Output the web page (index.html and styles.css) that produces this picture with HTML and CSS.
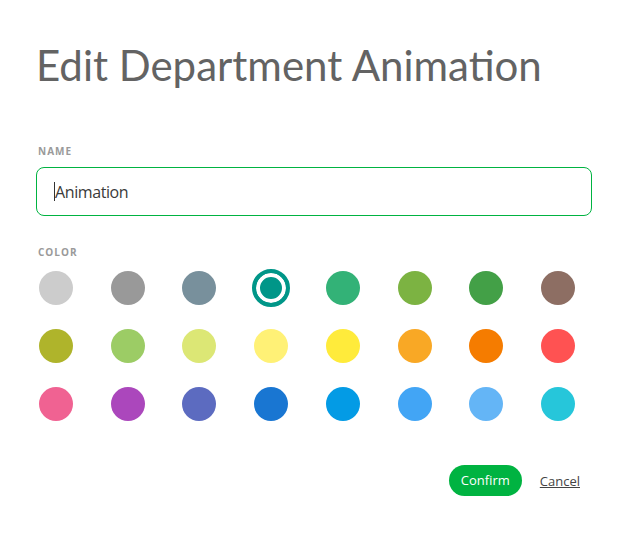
FILE: index.html
```html
<!DOCTYPE html>
<html>
<head>
<meta charset="utf-8">
<link rel="stylesheet" href="styles.css">
</head>
<body>
<div class="dialog">
  <h1 class="title">Edit Department Animation</h1>
  <label class="label label-name" for="name">NAME</label>
  <div class="field-wrap">
    <input id="name" class="field" type="text" value="Animation">
    <span class="caret"></span>
  </div>
  <div class="label label-color">COLOR</div>
  <div class="swatches">
    <div class="row">
      <span class="cell"><span class="dot" style="background:#cccccc"></span></span>
      <span class="cell"><span class="dot" style="background:#999999"></span></span>
      <span class="cell"><span class="dot" style="background:#78909c"></span></span>
      <span class="cell"><span class="dot selected" style="background:#009688"></span></span>
      <span class="cell"><span class="dot" style="background:#33b277"></span></span>
      <span class="cell"><span class="dot" style="background:#7cb342"></span></span>
      <span class="cell"><span class="dot" style="background:#43a047"></span></span>
      <span class="cell"><span class="dot" style="background:#8d6e63"></span></span>
    </div>
    <div class="row">
      <span class="cell"><span class="dot" style="background:#afb42b"></span></span>
      <span class="cell"><span class="dot" style="background:#9ccc65"></span></span>
      <span class="cell"><span class="dot" style="background:#dce775"></span></span>
      <span class="cell"><span class="dot" style="background:#fff176"></span></span>
      <span class="cell"><span class="dot" style="background:#ffeb3b"></span></span>
      <span class="cell"><span class="dot" style="background:#f9a825"></span></span>
      <span class="cell"><span class="dot" style="background:#f57c00"></span></span>
      <span class="cell"><span class="dot" style="background:#ff5252"></span></span>
    </div>
    <div class="row">
      <span class="cell"><span class="dot" style="background:#f06292"></span></span>
      <span class="cell"><span class="dot" style="background:#ab47bc"></span></span>
      <span class="cell"><span class="dot" style="background:#5c6bc0"></span></span>
      <span class="cell"><span class="dot" style="background:#1976d2"></span></span>
      <span class="cell"><span class="dot" style="background:#039be5"></span></span>
      <span class="cell"><span class="dot" style="background:#42a5f5"></span></span>
      <span class="cell"><span class="dot" style="background:#64b5f6"></span></span>
      <span class="cell"><span class="dot" style="background:#26c6da"></span></span>
    </div>
  </div>
  <div class="actions">
    <button class="confirm" type="button">Confirm</button>
    <a class="cancel" href="#">Cancel</a>
  </div>
</div>
</body>
</html>
```

FILE: styles.css
```css
html, body {
  margin: 0;
  padding: 0;
  background: #ffffff;
}

.dialog {
  width: 556px;
  padding: 40px 0 0 36px;
  font-family: "Open Sans", sans-serif;
}

.title {
  margin: 0;
  font-family: Lato, sans-serif;
  font-weight: 400;
  font-size: 42px;
  line-height: 50px;
  color: #636363;
}

.label {
  display: block;
  font-family: "Open Sans", sans-serif;
  font-weight: 700;
  font-size: 10px;
  line-height: 12px;
  letter-spacing: 1px;
  color: #9a9a9a;
  padding-left: 2px;
}

.label-name {
  margin-top: 55px;
}

.field-wrap {
  position: relative;
  margin-top: 10px;
}

.field {
  display: block;
  box-sizing: border-box;
  width: 556px;
  height: 49px;
  margin: 0;
  padding: 0 18px;
  border: 1px solid #00b341;
  border-radius: 8px;
  outline: none;
  font-family: "Open Sans", sans-serif;
  font-size: 16px;
  letter-spacing: -0.4px;
  color: #3a3a3a;
  background: #ffffff;
}

.caret {
  position: absolute;
  left: 18px;
  top: 15px;
  width: 1px;
  height: 19px;
  background: #333333;
}

.label-color {
  margin-top: 30px;
}

.swatches {
  width: 540px;
  margin: 11px 0 0 1px;
  display: flex;
  flex-direction: column;
  gap: 20px;
}

.row {
  display: flex;
  justify-content: space-between;
}

.cell {
  width: 38px;
  height: 38px;
  display: flex;
  align-items: center;
  justify-content: center;
}

.dot {
  width: 34px;
  height: 34px;
  border-radius: 50%;
  display: block;
}

.dot.selected {
  box-sizing: border-box;
  width: 38px;
  height: 38px;
  border: 4px solid #009688;
  box-shadow: inset 0 0 0 4px #ffffff;
}

.actions {
  display: flex;
  justify-content: flex-end;
  align-items: center;
  gap: 18px;
  margin-top: 42px;
  padding-right: 12px;
}

.confirm {
  height: 31px;
  padding: 0 12px;
  border: none;
  border-radius: 16px;
  background: #00b341;
  color: #ffffff;
  font-family: "Open Sans", sans-serif;
  font-size: 13px;
  line-height: 31px;
}

.cancel {
  font-family: "Open Sans", sans-serif;
  font-size: 13px;
  color: #444444;
  text-decoration: underline;
}
```
